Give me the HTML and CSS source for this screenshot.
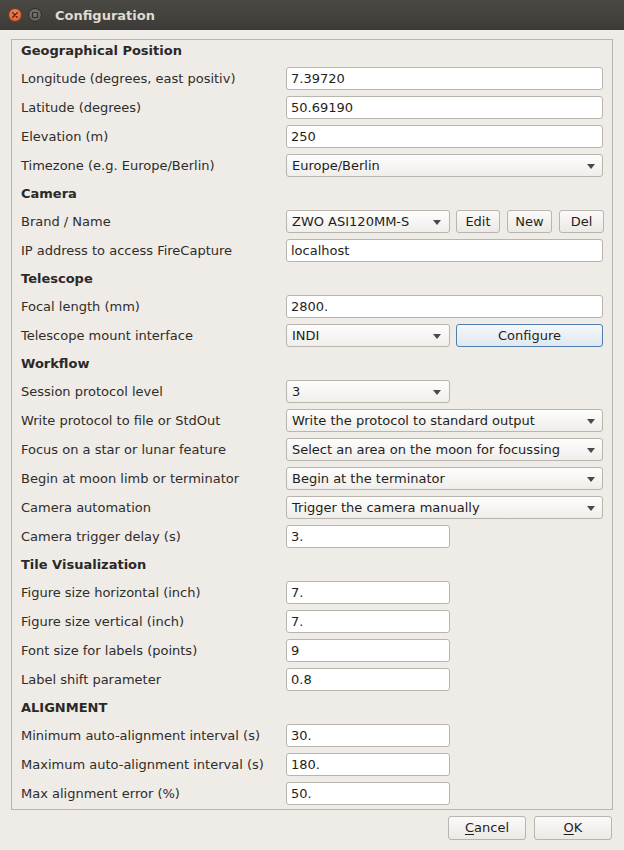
FILE: index.html
```html
<!DOCTYPE html>
<html>
<head>
<meta charset="utf-8">
<link rel="stylesheet" href="styles.css">
</head>
<body>
<div class="titlebar">
  <span class="wbtn close"><svg width="14" height="14" viewBox="0 0 14 14"><path d="M4.8 4.8 L9.2 9.2 M9.2 4.8 L4.8 9.2" stroke="#3a2a22" stroke-width="1.3" stroke-linecap="round"/></svg></span>
  <span class="wbtn mini"><svg width="14" height="14" viewBox="0 0 14 14"><rect x="4.5" y="4.5" width="5" height="5" rx="0.8" fill="none" stroke="#2e2d2a" stroke-width="1.2"/></svg></span>
  <span class="title">Configuration</span>
</div>
<div class="frame">
  <div class="form">
    <div class="hdr">Geographical Position</div>
    <div class="lbl">Longitude (degrees, east positiv)</div><div class="fld"><div class="edit">7.39720</div></div>
    <div class="lbl">Latitude (degrees)</div><div class="fld"><div class="edit">50.69190</div></div>
    <div class="lbl">Elevation (m)</div><div class="fld"><div class="edit">250</div></div>
    <div class="lbl">Timezone (e.g. Europe/Berlin)</div><div class="fld"><div class="combo">Europe/Berlin</div></div>

    <div class="hdr">Camera</div>
    <div class="lbl">Brand / Name</div>
    <div class="fld split">
      <div class="combo short">ZWO ASI120MM-S</div>
      <div class="btn b-edit">Edit</div>
      <div class="btn b-new">New</div>
      <div class="btn b-del">Del</div>
    </div>
    <div class="lbl">IP address to access FireCapture</div><div class="fld"><div class="edit">localhost</div></div>

    <div class="hdr">Telescope</div>
    <div class="lbl">Focal length (mm)</div><div class="fld"><div class="edit">2800.</div></div>
    <div class="lbl">Telescope mount interface</div>
    <div class="fld split">
      <div class="combo short">INDI</div>
      <div class="btn focus b-conf">Configure</div>
    </div>

    <div class="hdr">Workflow</div>
    <div class="lbl">Session protocol level</div><div class="fld"><div class="combo short">3</div></div>
    <div class="lbl">Write protocol to file or StdOut</div><div class="fld"><div class="combo">Write the protocol to standard output</div></div>
    <div class="lbl">Focus on a star or lunar feature</div><div class="fld"><div class="combo">Select an area on the moon for focussing</div></div>
    <div class="lbl">Begin at moon limb or terminator</div><div class="fld"><div class="combo">Begin at the terminator</div></div>
    <div class="lbl">Camera automation</div><div class="fld"><div class="combo">Trigger the camera manually</div></div>
    <div class="lbl">Camera trigger delay (s)</div><div class="fld"><div class="edit short">3.</div></div>

    <div class="hdr">Tile Visualization</div>
    <div class="lbl">Figure size horizontal (inch)</div><div class="fld"><div class="edit short">7.</div></div>
    <div class="lbl">Figure size vertical (inch)</div><div class="fld"><div class="edit short">7.</div></div>
    <div class="lbl">Font size for labels (points)</div><div class="fld"><div class="edit short">9</div></div>
    <div class="lbl">Label shift parameter</div><div class="fld"><div class="edit short">0.8</div></div>

    <div class="hdr">ALIGNMENT</div>
    <div class="lbl">Minimum auto-alignment interval (s)</div><div class="fld"><div class="edit short">30.</div></div>
    <div class="lbl">Maximum auto-alignment interval (s)</div><div class="fld"><div class="edit short">180.</div></div>
    <div class="lbl">Max alignment error (%)</div><div class="fld"><div class="edit short">50.</div></div>
  </div>
</div>
<div class="actions">
  <div class="btn dlg"><u>C</u>ancel</div>
  <div class="btn dlg"><u>O</u>K</div>
</div>
</body>
</html>
```
FILE: styles.css
```css
html, body {
  margin: 0;
  padding: 0;
  background: #efebe7;
  width: 624px;
  height: 850px;
  overflow: hidden;
  font-family: "DejaVu Sans", "Liberation Sans", sans-serif;
  font-size: 13px;
  color: #2e2d2a;
}
.titlebar {
  height: 30px;
  background: linear-gradient(#4a4944, #3c3b37);
  display: flex;
  align-items: center;
  padding-left: 8px;
  box-sizing: border-box;
}
.wbtn {
  width: 14px;
  height: 14px;
  border-radius: 50%;
  display: flex;
  margin-right: 6px;
  box-sizing: border-box;
}
.close {
  background: radial-gradient(circle at 50% 35%, #f58a5c, #e2521d);
  border: 1px solid #7b3a1f;
}
.mini {
  background: radial-gradient(circle at 50% 35%, #7a7974, #55544f);
  border: 1px solid #2f2e2b;
}
.wbtn svg { margin: -1px; }
.title {
  margin-left: 7px;
  font-size: 13px;
  font-weight: bold;
  color: #dfdbd2;
}
.frame {
  margin: 9px 0 0 11px;
  height: 766px;
  border: 1px solid #b9b5af;
  padding: 0 9px 3px 9px;
  width: 582px;
}
.form {
  display: grid;
  grid-template-columns: 265px 317px;
  row-gap: 6px;
}
.hdr {
  grid-column: 1 / 3;
  font-weight: bold;
  height: 21px;
  line-height: 21px;
  color: #2a2927;
}
.lbl {
  height: 23px;
  line-height: 23px;
  white-space: nowrap;
}
.fld { display: flex; height: 23px; }
.split { gap: 6px; }
.edit {
  width: 317px;
  height: 23px;
  box-sizing: border-box;
  background: #fff;
  border: 1px solid #b8b4ae;
  border-radius: 3px;
  padding-left: 4px;
  line-height: 21px;
  color: #1f1e1c;
}
.combo {
  position: relative;
  width: 317px;
  height: 23px;
  box-sizing: border-box;
  border: 1px solid #b8b4ae;
  border-radius: 3px;
  background: linear-gradient(#fdfdfc, #f0eeeb);
  padding-left: 5px;
  line-height: 21px;
  color: #1f1e1c;
  white-space: nowrap;
}
.edit.short, .combo.short { width: 164px; flex: none; }
.combo::after {
  content: "";
  position: absolute;
  right: 7px;
  top: 9px;
  border-left: 4px solid transparent;
  border-right: 4px solid transparent;
  border-top: 5px solid #4a4945;
}
.combo.short::after { right: 8px; }
.btn {
  height: 23px;
  box-sizing: border-box;
  border: 1px solid #b8b4ae;
  border-radius: 3px;
  background: linear-gradient(#fbfaf9, #ebe9e6);
  text-align: center;
  line-height: 21px;
  color: #1f1e1c;
  flex: none;
}
.b-edit { width: 44px; }
.b-new { width: 45px; margin-left: 1px; }
.b-del { width: 45px; margin-left: 1px; }
.b-conf { width: 147px; }
.btn.focus {
  border-color: #4f7faf;
  background: linear-gradient(#f5f8fb, #dfe7ef);
}
.actions {
  display: flex;
  justify-content: flex-end;
  gap: 8px;
  margin-top: 6px;
  padding-right: 12px;
}
.btn.dlg {
  width: 78px;
  height: 24px;
  line-height: 22px;
}
.dlg u { text-underline-offset: 2px; }
```
